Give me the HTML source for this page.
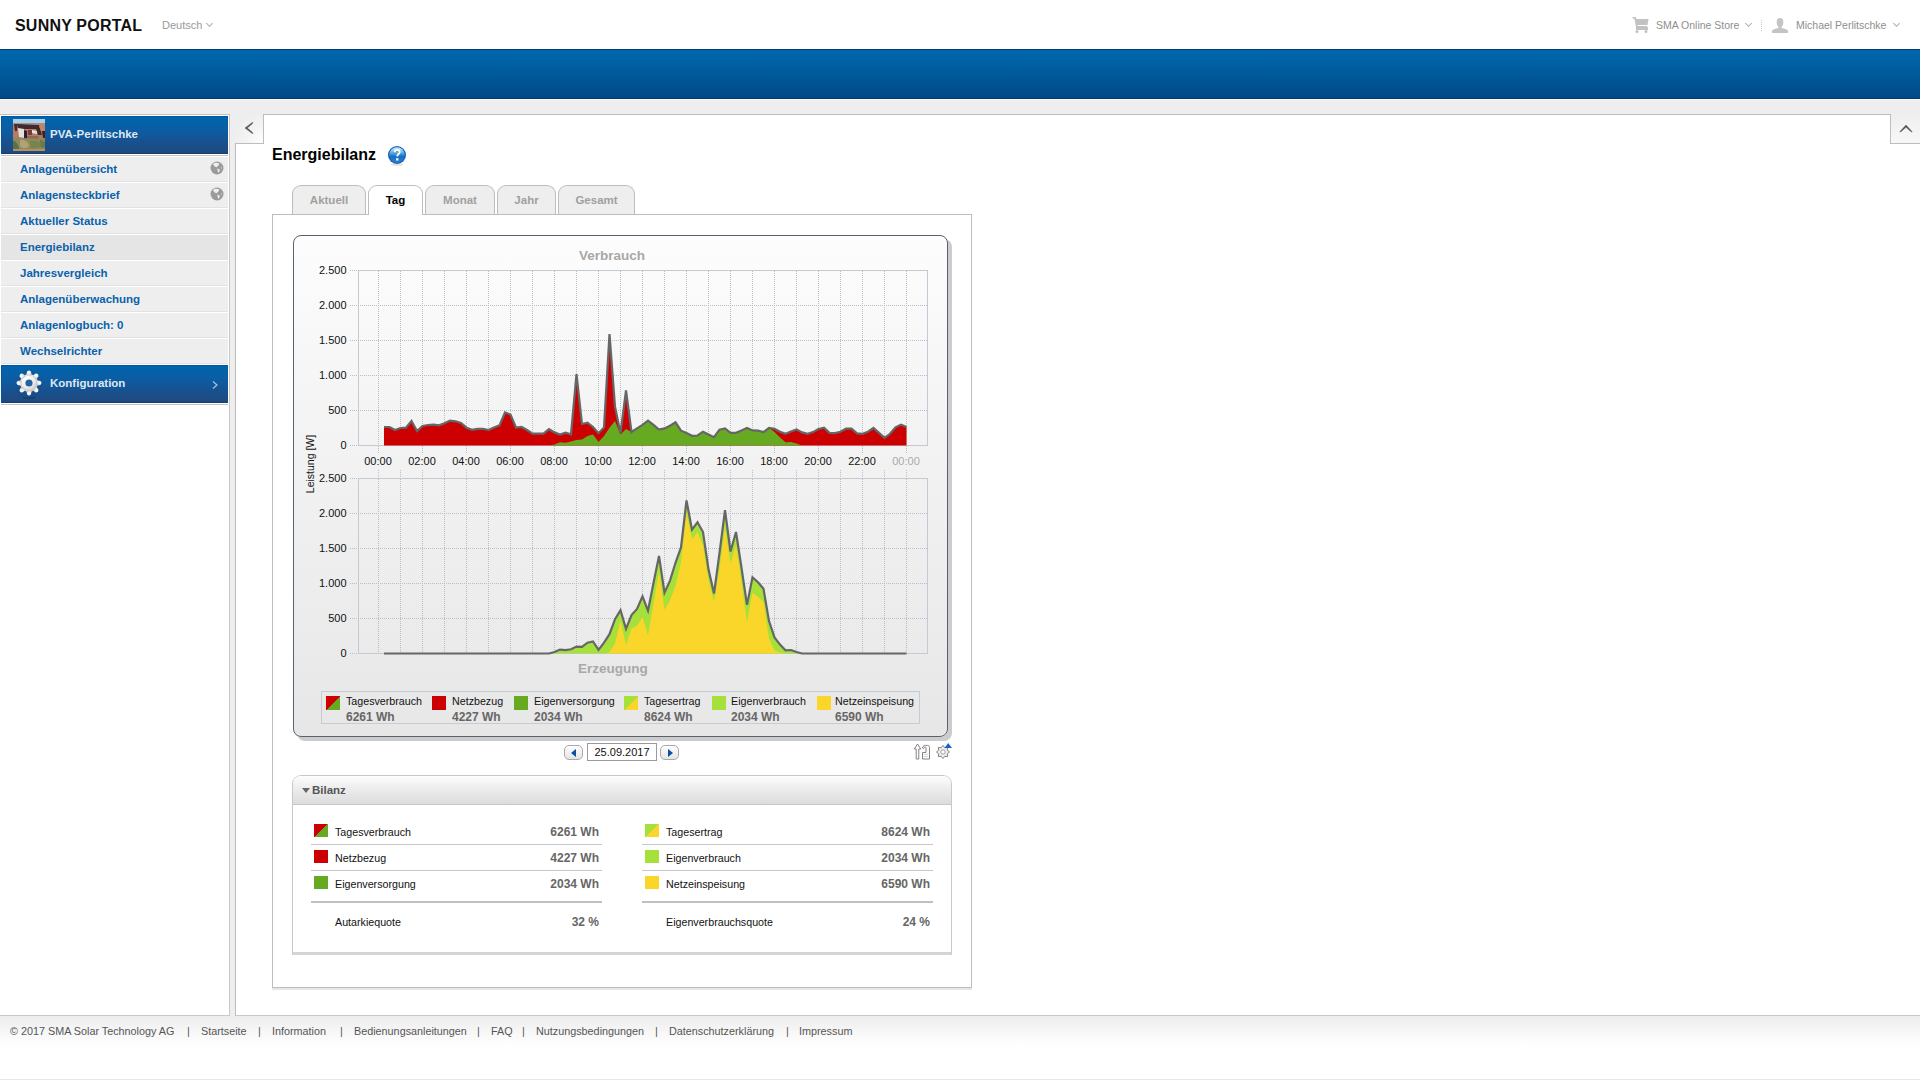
<!DOCTYPE html>
<html><head><meta charset="utf-8"><title>Sunny Portal - Energiebilanz</title>
<style>
*{margin:0;padding:0;box-sizing:border-box}
html,body{width:1920px;height:1080px;overflow:hidden;background:#fff;font-family:"Liberation Sans",sans-serif;position:relative}
.abs{position:absolute}
#hdr{position:absolute;left:0;top:0;width:1920px;height:49px;background:#fff}
.logo{position:absolute;left:15px;top:17px;font-size:16px;font-weight:bold;color:#111;letter-spacing:0.2px;white-space:nowrap}
.lang{position:absolute;left:162px;top:19px;font-size:11px;color:#9a9a9a}
.hdrtxt{position:absolute;top:19px;font-size:10.5px;color:#8f8f8f;white-space:nowrap}
.chev{position:absolute;width:5px;height:5px;border-right:1px solid #b0b0b0;border-bottom:1px solid #b0b0b0;transform:rotate(45deg)}
#bar{position:absolute;left:0;top:49px;width:1920px;height:50px;background:linear-gradient(#0066aa,#0061a5 25%,#004a86);border-top:1px solid #003d74;border-bottom:1px solid #003c70}
#gray{position:absolute;left:0;top:99px;width:1920px;height:917px;background:#eeeeee;border-top:1px solid #fafafa}
#side{position:absolute;left:0;top:114px;width:230px;height:902px;background:#fff;border-top:1px solid #c2c2c2;border-right:1px solid #c8c8c8;border-bottom:1px solid #c8c8c8}
.bluehd{position:absolute;left:1px;width:227px;height:38px;background:linear-gradient(#0064aa,#0a5ea6 30%,#1a4f8a 75%,#1f4a80 95%,#123a6c);border-top:1px solid #0058a5;border-left:1px solid #0058a5}
.bluehd span{position:absolute;left:48px;top:11px;font-size:11.5px;font-weight:bold;color:#dde8f4;white-space:nowrap}
.sep{position:absolute;left:1px;width:227px;height:1px;background:#c4c4c4}
.item{position:absolute;left:1px;width:227px;height:26px;background:#eeeeee;border-top:1px solid #fff;border-bottom:1px solid #e2e2e2}
.item.sel{background:#e5e5e5}
.item span{position:absolute;left:19px;top:6px;font-size:11.5px;font-weight:bold;color:#0a62ab;white-space:nowrap}
#content{position:absolute;left:235px;top:114px;width:1685px;height:902px;background:#fff;border-left:1px solid #bdbdbd;border-top:1px solid #bdbdbd;border-bottom:1px solid #c8c8c8}
#coll{position:absolute;left:235px;top:114px;width:29px;height:30px;background:radial-gradient(circle at 100% 100%,#ffffff 0,#f4f4f4 40%,#eeeeee 75%);border-right:1px solid #bdbdbd;border-bottom:1px solid #bdbdbd}
#upbtn{position:absolute;left:1890px;top:114px;width:30px;height:30px;background:linear-gradient(#eeeeee,#f8f8f8);border-left:1px solid #bdbdbd;border-bottom:1px solid #bdbdbd}
.title{position:absolute;left:272px;top:146px;font-size:16px;font-weight:bold;color:#000;white-space:nowrap}
.tab{position:absolute;top:185px;height:29px;border:1px solid #bdbdbd;border-bottom:none;border-radius:9px 9px 0 0;background:#eeeeee;font-size:11.5px;font-weight:bold;color:#a0a0a0;text-align:center;padding-top:8px}
.tab.act{background:#fff;color:#000;height:30px}
#panel{position:absolute;left:272px;top:214px;width:700px;height:774px;border:1px solid #bdbdbd;background:#fff;box-shadow:0 2px 0 #e6e6e6}
#cbox{position:absolute;left:293px;top:235px;width:655px;height:502px;border:2px solid #56636f;border-width:1.5px;border-radius:8px;background:linear-gradient(#fdfdfd,#f3f3f3 40%,#e7e7e7);box-shadow:4px 4px 0 #cccccc}
.ylab{position:absolute;font-size:11px;color:#111;text-align:right;width:40px}
.xlab{position:absolute;font-size:11px;color:#111;text-align:center;width:40px}
.ctitle{position:absolute;font-size:13.5px;font-weight:bold;color:#a8a8a8;white-space:nowrap}
#legend{position:absolute;left:321px;top:691px;width:599px;height:33px;border:1px solid #c5ccd3}
.lg{position:absolute;top:2.5px;font-size:10.7px;color:#111;white-space:nowrap}
.lg b{display:block;color:#666;font-size:12px;margin-top:3.5px}
.sw{position:absolute;width:14px;height:14px}
.sw.rg{background:linear-gradient(135deg,#cc0000 50%,#66aa22 50%)}
.sw.r{background:#cc0000}
.sw.g{background:#66aa22}
.sw.ly{background:linear-gradient(135deg,#a6e03a 50%,#fad62b 50%)}
.sw.l{background:#a6e03a}
.sw.y{background:#fad62b}
#bil{position:absolute;left:292px;top:775px;width:660px;height:180px;border:1px solid #c8c8c8;border-bottom:3px solid #d4d4d4;border-radius:9px 9px 0 0;background:#fff}
#bilhd{position:absolute;left:0;top:0;width:658px;height:29px;border-radius:8px 8px 0 0;background:linear-gradient(#fdfdfd,#f0f0f0 35%,#dcdcdc);border-bottom:1px solid #c8c8c8}
.brow{position:absolute;height:26px;border-bottom:1px solid #c8c8c8;font-size:10.7px;color:#111}
.brow .nm{position:absolute;left:24px;top:7px;white-space:nowrap}
.brow .vl{position:absolute;right:3px;top:6px;font-weight:bold;color:#666;font-size:12px;white-space:nowrap}
.brow .sw{left:3px;top:5px;width:14px;height:13px}
#foot{position:absolute;left:0;top:1016px;width:1920px;height:64px;background:linear-gradient(#ececec,#f7f7f7 25%,#fefefe 45%,#fff 50%);border-bottom:1px solid #e8e8e8}
#foot span{position:absolute;top:9px;font-size:10.8px;color:#555;white-space:nowrap}
</style></head><body>
<div id="hdr">
 <div class="logo">SUNNY PORTAL</div>
 <div class="lang">Deutsch</div>
 <div class="chev" style="left:207px;top:21px"></div>
 <svg class="abs" style="left:1632px;top:17px" width="17" height="16" viewBox="0 0 17 16"><path d="M0.5,0.5 L3,0.5 L5,10 L15,10" fill="none" stroke="#c2c2c2" stroke-width="1.8"/><path d="M3.5,2 L16.5,2 L15.5,8 L5,8Z" fill="#c2c2c2"/><rect x="4" y="10" width="12" height="3" fill="#c2c2c2"/><circle cx="5" cy="14.5" r="1.5" fill="#c2c2c2"/><circle cx="14" cy="14.5" r="1.5" fill="#c2c2c2"/></svg>
 <div class="hdrtxt" style="left:1656px">SMA Online Store</div>
 <div class="chev" style="left:1746px;top:21px"></div>
 <div class="abs" style="left:1761px;top:20px;width:1px;height:11px;border-left:1px dotted #c8c8c8"></div>
 <svg class="abs" style="left:1772px;top:18px" width="16" height="15" viewBox="0 0 16 15"><path d="M8,0 C10.5,0 11.5,2 11.3,4.5 C11.2,6.5 10.5,8 9.5,9 L9.5,10 C12,10.5 16,11.5 16,13 L16,15 L0,15 L0,13 C0,11.5 4,10.5 6.5,10 L6.5,9 C5.5,8 4.8,6.5 4.7,4.5 C4.5,2 5.5,0 8,0Z" fill="#c4c4c4"/></svg>
 <div class="hdrtxt" style="left:1796px">Michael Perlitschke</div>
 <div class="chev" style="left:1894px;top:21px"></div>
</div>
<div id="bar"></div>
<div id="gray"></div>

<div id="side">
</div>
<div class="bluehd" style="top:116px"><svg width="32" height="32" viewBox="0 0 32 32" style="position:absolute;left:11px;top:2px">
<defs><filter id="hb" x="0" y="0" width="1" height="1"><feGaussianBlur stdDeviation="0.55"/></filter><clipPath id="hc"><rect width="32" height="32"/></clipPath></defs>
<g clip-path="url(#hc)"><g filter="url(#hb)">
<rect x="-2" y="-2" width="36" height="36" fill="#b57a62"/>
<rect x="-2" y="-2" width="36" height="6" fill="#a6d2f2"/>
<path d="M-2,4 L34,4 L34,7 L-2,6Z" fill="#b58a78"/>
<path d="M1,5 L4,5 L4,12 L2,12Z" fill="#4a2a2a"/>
<path d="M4,5 L24,6 L25,10 L5,10Z" fill="#3c2c32"/>
<path d="M5,9 L11,10 L12,19 L6,18Z" fill="#e4e0dc"/>
<path d="M11,11 L14,12 L14,20 L11,19Z" fill="#2a2030"/>
<path d="M15,11 L19,11 L19,16 L15,16Z" fill="#7a3a30"/>
<path d="M19,11 L24,12 L24,15 L19,14Z" fill="#e8e0dc"/>
<path d="M22,6 L26,6 L29,16 L25,16Z" fill="#3e2c2c"/>
<path d="M26,7 L34,7 L34,12 L28,12Z" fill="#c48462"/>
<path d="M29,12 L33,12 L33,19 L30,19Z" fill="#3a2424"/>
<path d="M14,17 L26,17 L25,20 L14,20Z" fill="#8a6a5a"/>
<path d="M-2,20 C4,18 8,21 14,19 C20,20 26,19 34,20 L34,34 L-2,34Z" fill="#8c8a5a"/>
<path d="M-2,22 C2,21 5,24 6,30 L-2,30Z" fill="#5c7048"/>
<path d="M7,21 C11,20 15,22 16,27 C14,30 9,30 7,27Z" fill="#b0a274"/>
<path d="M17,22 C21,21 26,22 29,25 C28,29 22,30 18,29Z" fill="#78844e"/>
<path d="M27,21 C30,21 33,23 33,28 L28,29Z" fill="#6c7a48"/>
<rect x="-2" y="30" width="36" height="4" fill="#b88e62"/>
</g></g>
</svg><span>PVA-Perlitschke</span></div>
<div class="sep" style="top:155px"></div>
<div class="item" style="top:156px"><span>Anlagenübersicht</span><svg width="14" height="14" viewBox="0 0 14 14" style="position:absolute;left:208.5px;top:4px"><circle cx="7" cy="7" r="6.5" fill="#9b9b9b"/><path d="M3,3.2 C4,2 6,1.5 7.5,2 L9.5,2.6 L8.2,4.8 L6.5,6.2 L4.6,5.6 Z" fill="#eee"/><path d="M7.3,7.6 L9.3,8.2 L9.8,9.6 L8.4,12 L7.8,10.2 Z" fill="#eee"/><path d="M11,6 L11.8,6.2 L11.6,8 L11,7.4Z" fill="#ddd"/></svg></div>
<div class="item" style="top:182px"><span>Anlagensteckbrief</span><svg width="14" height="14" viewBox="0 0 14 14" style="position:absolute;left:208.5px;top:4px"><circle cx="7" cy="7" r="6.5" fill="#9b9b9b"/><path d="M3,3.2 C4,2 6,1.5 7.5,2 L9.5,2.6 L8.2,4.8 L6.5,6.2 L4.6,5.6 Z" fill="#eee"/><path d="M7.3,7.6 L9.3,8.2 L9.8,9.6 L8.4,12 L7.8,10.2 Z" fill="#eee"/><path d="M11,6 L11.8,6.2 L11.6,8 L11,7.4Z" fill="#ddd"/></svg></div>
<div class="item" style="top:208px"><span>Aktueller Status</span></div>
<div class="item sel" style="top:234px"><span>Energiebilanz</span></div>
<div class="item" style="top:260px"><span>Jahresvergleich</span></div>
<div class="item" style="top:286px"><span>Anlagenüberwachung</span></div>
<div class="item" style="top:312px"><span>Anlagenlogbuch: 0</span></div>
<div class="item" style="top:338px"><span>Wechselrichter</span></div>
<div class="bluehd" style="top:365px"><svg width="34" height="36" viewBox="-17 -17 34 36" style="position:absolute;left:10px;top:0px">
<defs><radialGradient id="gg" cx="0.38" cy="0.32" r="0.75"><stop offset="0" stop-color="#ffffff"/><stop offset="0.55" stop-color="#ececec"/><stop offset="1" stop-color="#bcbcbc"/></radialGradient>
<radialGradient id="gh" cx="0.5" cy="0.5" r="0.5"><stop offset="0" stop-color="#0b3a70" stop-opacity="0.35"/><stop offset="1" stop-color="#0b3a70" stop-opacity="0"/></radialGradient></defs>
<circle cx="0" cy="1" r="16" fill="url(#gh)"/>
<ellipse cx="0.5" cy="15" rx="6.5" ry="1.1" fill="#0a2850" opacity="0.35"/>
<g fill="url(#gg)">
<circle cx="0" cy="0" r="9"/>
<path d="M-2.8,-7.5 L-1.9,-11.4 Q0,-13.6 1.9,-11.4 L2.8,-7.5Z" transform="rotate(0)"/><path d="M-2.8,-7.5 L-1.9,-11.4 Q0,-13.6 1.9,-11.4 L2.8,-7.5Z" transform="rotate(45)"/><path d="M-2.8,-7.5 L-1.9,-11.4 Q0,-13.6 1.9,-11.4 L2.8,-7.5Z" transform="rotate(90)"/><path d="M-2.8,-7.5 L-1.9,-11.4 Q0,-13.6 1.9,-11.4 L2.8,-7.5Z" transform="rotate(135)"/><path d="M-2.8,-7.5 L-1.9,-11.4 Q0,-13.6 1.9,-11.4 L2.8,-7.5Z" transform="rotate(180)"/><path d="M-2.8,-7.5 L-1.9,-11.4 Q0,-13.6 1.9,-11.4 L2.8,-7.5Z" transform="rotate(225)"/><path d="M-2.8,-7.5 L-1.9,-11.4 Q0,-13.6 1.9,-11.4 L2.8,-7.5Z" transform="rotate(270)"/><path d="M-2.8,-7.5 L-1.9,-11.4 Q0,-13.6 1.9,-11.4 L2.8,-7.5Z" transform="rotate(315)"/>
</g>
<circle cx="0" cy="0" r="3.6" fill="#2363a0"/>
</svg><span style="left:48px;top:11px">Konfiguration</span><svg width="6" height="8" viewBox="0 0 6 8" style="position:absolute;left:210px;top:15px"><path d="M1,0.5 L5,4 L1,7.5" fill="none" stroke="#a8c4e0" stroke-width="1.2"/></svg></div>
<div class="sep" style="top:404px"></div>

<div id="content"></div>
<div id="coll"></div><svg class="abs" style="left:240px;top:118px" width="20" height="20" viewBox="240 118 20 20"><path d="M252.6,122.3 L245,128 L252.6,133.7 L252.6,132.6 L247.3,128 L252.6,123.4Z" fill="#555" stroke="#555" stroke-width="0.5" stroke-linejoin="round"/></svg>
<div id="upbtn"></div><svg class="abs" style="left:1896px;top:120px" width="20" height="16" viewBox="1896 120 20 16"><path d="M1899.8,131.8 L1906,125 L1912.2,131.8 L1911.2,131.8 L1906,127.3 L1900.8,131.8Z" fill="#555" stroke="#555" stroke-width="0.5" stroke-linejoin="round"/></svg>

<div class="title">Energiebilanz</div>
<svg class="abs" style="left:387px;top:145px" width="20" height="21" viewBox="0 0 20 21">
 <defs><linearGradient id="hq" x1="0" y1="0" x2="0" y2="1"><stop offset="0" stop-color="#d2f4ff"/><stop offset="0.35" stop-color="#58b0ec"/><stop offset="0.6" stop-color="#0f70c8"/><stop offset="1" stop-color="#2a80d0"/></linearGradient></defs>
 <ellipse cx="10" cy="19.6" rx="6" ry="1.1" fill="#000" opacity="0.12"/>
 <circle cx="10" cy="10" r="9" fill="#1c5db0"/>
 <circle cx="10" cy="10" r="7.8" fill="url(#hq)"/>
 <path d="M7.6,7.4 C7.6,5.8 8.7,5 10.1,5 C11.7,5 12.7,5.9 12.7,7.2 C12.7,8.8 10.6,9.1 10.3,10.8 L10.3,11.6" fill="none" stroke="#333" stroke-width="2.2" opacity="0.55" transform="translate(-0.2,0.5)"/>
 <path d="M7.6,7.4 C7.6,5.8 8.7,5 10.1,5 C11.7,5 12.7,5.9 12.7,7.2 C12.7,8.8 10.6,9.1 10.3,10.8 L10.3,11.6" fill="none" stroke="#fff" stroke-width="2"/>
 <rect x="9.1" y="13.2" width="2.3" height="2.3" fill="#fff"/>
</svg>

<div id="panel"></div>
<div class="tab" style="left:292px;width:74px">Aktuell</div>
<div class="tab act" style="left:368px;width:55px">Tag</div>
<div class="tab" style="left:425px;width:70px">Monat</div>
<div class="tab" style="left:497px;width:59px">Jahr</div>
<div class="tab" style="left:558px;width:77px">Gesamt</div>

<div id="cbox"></div>

<svg class="chart" width="1920" height="1080" viewBox="0 0 1920 1080" style="position:absolute;left:0;top:0">
 <defs>
  <linearGradient id="cbg" x1="0" y1="0" x2="0" y2="1">
   <stop offset="0" stop-color="#fdfdfd"/><stop offset="1" stop-color="#e6e6e6"/>
  </linearGradient>
 </defs>
 <g stroke="#b9bec4" stroke-width="1" stroke-dasharray="1 1" fill="none">
  <line x1="378.5" y1="271" x2="378.5" y2="445"/>
<line x1="400.5" y1="271" x2="400.5" y2="445"/>
<line x1="422.5" y1="271" x2="422.5" y2="445"/>
<line x1="444.5" y1="271" x2="444.5" y2="445"/>
<line x1="466.5" y1="271" x2="466.5" y2="445"/>
<line x1="488.5" y1="271" x2="488.5" y2="445"/>
<line x1="510.5" y1="271" x2="510.5" y2="445"/>
<line x1="532.5" y1="271" x2="532.5" y2="445"/>
<line x1="554.5" y1="271" x2="554.5" y2="445"/>
<line x1="576.5" y1="271" x2="576.5" y2="445"/>
<line x1="598.5" y1="271" x2="598.5" y2="445"/>
<line x1="620.5" y1="271" x2="620.5" y2="445"/>
<line x1="642.5" y1="271" x2="642.5" y2="445"/>
<line x1="664.5" y1="271" x2="664.5" y2="445"/>
<line x1="686.5" y1="271" x2="686.5" y2="445"/>
<line x1="708.5" y1="271" x2="708.5" y2="445"/>
<line x1="730.5" y1="271" x2="730.5" y2="445"/>
<line x1="752.5" y1="271" x2="752.5" y2="445"/>
<line x1="774.5" y1="271" x2="774.5" y2="445"/>
<line x1="796.5" y1="271" x2="796.5" y2="445"/>
<line x1="818.5" y1="271" x2="818.5" y2="445"/>
<line x1="840.5" y1="271" x2="840.5" y2="445"/>
<line x1="862.5" y1="271" x2="862.5" y2="445"/>
<line x1="884.5" y1="271" x2="884.5" y2="445"/>
<line x1="906.5" y1="271" x2="906.5" y2="445"/>
<line x1="358" y1="305.5" x2="927" y2="305.5"/>
<line x1="358" y1="340.5" x2="927" y2="340.5"/>
<line x1="358" y1="375.5" x2="927" y2="375.5"/>
<line x1="358" y1="410.5" x2="927" y2="410.5"/>
  <line x1="378.5" y1="479" x2="378.5" y2="653"/>
<line x1="400.5" y1="479" x2="400.5" y2="653"/>
<line x1="422.5" y1="479" x2="422.5" y2="653"/>
<line x1="444.5" y1="479" x2="444.5" y2="653"/>
<line x1="466.5" y1="479" x2="466.5" y2="653"/>
<line x1="488.5" y1="479" x2="488.5" y2="653"/>
<line x1="510.5" y1="479" x2="510.5" y2="653"/>
<line x1="532.5" y1="479" x2="532.5" y2="653"/>
<line x1="554.5" y1="479" x2="554.5" y2="653"/>
<line x1="576.5" y1="479" x2="576.5" y2="653"/>
<line x1="598.5" y1="479" x2="598.5" y2="653"/>
<line x1="620.5" y1="479" x2="620.5" y2="653"/>
<line x1="642.5" y1="479" x2="642.5" y2="653"/>
<line x1="664.5" y1="479" x2="664.5" y2="653"/>
<line x1="686.5" y1="479" x2="686.5" y2="653"/>
<line x1="708.5" y1="479" x2="708.5" y2="653"/>
<line x1="730.5" y1="479" x2="730.5" y2="653"/>
<line x1="752.5" y1="479" x2="752.5" y2="653"/>
<line x1="774.5" y1="479" x2="774.5" y2="653"/>
<line x1="796.5" y1="479" x2="796.5" y2="653"/>
<line x1="818.5" y1="479" x2="818.5" y2="653"/>
<line x1="840.5" y1="479" x2="840.5" y2="653"/>
<line x1="862.5" y1="479" x2="862.5" y2="653"/>
<line x1="884.5" y1="479" x2="884.5" y2="653"/>
<line x1="906.5" y1="479" x2="906.5" y2="653"/>
<line x1="358" y1="513.5" x2="927" y2="513.5"/>
<line x1="358" y1="548.5" x2="927" y2="548.5"/>
<line x1="358" y1="583.5" x2="927" y2="583.5"/>
<line x1="358" y1="618.5" x2="927" y2="618.5"/>
 </g>
 <g stroke="#b9bec4" stroke-width="1" stroke-dasharray="1 1" fill="none">
  <line x1="350" y1="270.5" x2="358" y2="270.5"/><line x1="350" y1="305.5" x2="358" y2="305.5"/><line x1="350" y1="340.5" x2="358" y2="340.5"/><line x1="350" y1="375.5" x2="358" y2="375.5"/><line x1="350" y1="410.5" x2="358" y2="410.5"/><line x1="350" y1="445.5" x2="358" y2="445.5"/>
  <line x1="350" y1="478.5" x2="358" y2="478.5"/><line x1="350" y1="513.5" x2="358" y2="513.5"/><line x1="350" y1="548.5" x2="358" y2="548.5"/><line x1="350" y1="583.5" x2="358" y2="583.5"/><line x1="350" y1="618.5" x2="358" y2="618.5"/><line x1="350" y1="653.5" x2="358" y2="653.5"/>
  <line x1="378.5" y1="446" x2="378.5" y2="454"/><line x1="422.5" y1="446" x2="422.5" y2="454"/><line x1="466.5" y1="446" x2="466.5" y2="454"/><line x1="510.5" y1="446" x2="510.5" y2="454"/><line x1="554.5" y1="446" x2="554.5" y2="454"/><line x1="598.5" y1="446" x2="598.5" y2="454"/><line x1="642.5" y1="446" x2="642.5" y2="454"/><line x1="686.5" y1="446" x2="686.5" y2="454"/><line x1="730.5" y1="446" x2="730.5" y2="454"/><line x1="774.5" y1="446" x2="774.5" y2="454"/><line x1="818.5" y1="446" x2="818.5" y2="454"/><line x1="862.5" y1="446" x2="862.5" y2="454"/><line x1="906.5" y1="446" x2="906.5" y2="454"/>
  <line x1="378.5" y1="470" x2="378.5" y2="478"/><line x1="400.5" y1="470" x2="400.5" y2="478"/><line x1="422.5" y1="470" x2="422.5" y2="478"/><line x1="444.5" y1="470" x2="444.5" y2="478"/><line x1="466.5" y1="470" x2="466.5" y2="478"/><line x1="488.5" y1="470" x2="488.5" y2="478"/><line x1="510.5" y1="470" x2="510.5" y2="478"/><line x1="532.5" y1="470" x2="532.5" y2="478"/><line x1="554.5" y1="470" x2="554.5" y2="478"/><line x1="576.5" y1="470" x2="576.5" y2="478"/><line x1="598.5" y1="470" x2="598.5" y2="478"/><line x1="620.5" y1="470" x2="620.5" y2="478"/><line x1="642.5" y1="470" x2="642.5" y2="478"/><line x1="664.5" y1="470" x2="664.5" y2="478"/><line x1="686.5" y1="470" x2="686.5" y2="478"/><line x1="708.5" y1="470" x2="708.5" y2="478"/><line x1="730.5" y1="470" x2="730.5" y2="478"/><line x1="752.5" y1="470" x2="752.5" y2="478"/><line x1="774.5" y1="470" x2="774.5" y2="478"/><line x1="796.5" y1="470" x2="796.5" y2="478"/><line x1="818.5" y1="470" x2="818.5" y2="478"/><line x1="840.5" y1="470" x2="840.5" y2="478"/><line x1="862.5" y1="470" x2="862.5" y2="478"/><line x1="884.5" y1="470" x2="884.5" y2="478"/><line x1="906.5" y1="470" x2="906.5" y2="478"/>
 </g>
 <rect x="358.5" y="270.5" width="569" height="175" fill="none" stroke="#c3cad1"/>
 <rect x="358.5" y="478.5" width="569" height="175" fill="none" stroke="#c3cad1"/>
 <path d="M384,445.5 L384,427 L389.5,427 L395,430 L400.5,428 L406,427.7 L411.5,421 L417,431 L422.5,426 L428,425 L433.5,424.6 L439,425.3 L444.5,423.3 L450,420.6 L455.5,421.3 L461,423 L466.5,427.7 L472,429.8 L477.5,428.8 L483,428.8 L488.5,430 L494,427.5 L499.5,425.4 L505,412.5 L510.5,414.6 L516,427.5 L521.5,427 L527,430 L532.5,433.6 L538,433.6 L543.5,433.6 L549,429.2 L554.5,432.4 L560,434.5 L565.5,432.6 L571,434.2 L576.5,374 L582,424 L587.5,422.7 L593,427 L598.5,433.2 L604,427.4 L609.5,334 L615,406.7 L620.5,433.3 L626,390.5 L631.5,432 L637,428.4 L642.5,424.8 L648,420.6 L653.5,424.8 L659,429.6 L664.5,428.4 L670,425.8 L675.5,422.3 L681,430.7 L686.5,433.1 L692,435.8 L697.5,435.5 L703,431.7 L708.5,434.5 L714,437.2 L719.5,429.7 L725,428.4 L730.5,432.8 L736,432.8 L741.5,430.4 L747,428 L752.5,430.4 L758,430.7 L763.5,432.1 L769,428 L774.5,428.7 L780,431.7 L785.5,433.8 L791,431.4 L796.5,429.4 L802,432.4 L807.5,433.8 L813,432.1 L818.5,429 L824,427.7 L829.5,432.8 L835,433.1 L840.5,431.7 L846,428.7 L851.5,428.7 L857,433.4 L862.5,433.8 L868,431.7 L873.5,428 L879,432.8 L884.5,437.8 L890,433.8 L895.5,427.3 L901,424.6 L906.5,427 L906.5,445.5 Z" fill="#cc0000"/>
 <path d="M384,445.5 L384,445.5 L389.5,445.5 L395,445.5 L400.5,445.5 L406,445.5 L411.5,445.5 L417,445.5 L422.5,445.5 L428,445.5 L433.5,445.5 L439,445.5 L444.5,445.5 L450,445.5 L455.5,445.5 L461,445.5 L466.5,445.5 L472,445.5 L477.5,445.5 L483,445.5 L488.5,445.5 L494,445.5 L499.5,445.5 L505,445.5 L510.5,445.5 L516,445.5 L521.5,445.5 L527,445.5 L532.5,445.5 L538,445.5 L543.5,445.5 L549,445.5 L554.5,444.5 L560,442.3 L565.5,442.7 L571,441.6 L576.5,440 L582,439.6 L587.5,435.9 L593,434.5 L598.5,442 L604,435.9 L609.5,427.8 L615,421 L620.5,434.5 L626,429.1 L631.5,432 L637,428.4 L642.5,424.8 L648,420.6 L653.5,424.8 L659,429.6 L664.5,428.4 L670,425.8 L675.5,422.3 L681,430.7 L686.5,433.1 L692,435.8 L697.5,435.5 L703,431.7 L708.5,434.5 L714,437.2 L719.5,429.7 L725,428.4 L730.5,432.8 L736,432.8 L741.5,430.4 L747,428 L752.5,430.4 L758,430.7 L763.5,432.1 L769,428 L774.5,432.1 L780,437.5 L785.5,442.2 L791,441.9 L796.5,443.6 L802,445.5 L807.5,445.5 L813,445.5 L818.5,445.5 L824,445.5 L829.5,445.5 L835,445.5 L840.5,445.5 L846,445.5 L851.5,445.5 L857,445.5 L862.5,445.5 L868,445.5 L873.5,445.5 L879,445.5 L884.5,445.5 L890,445.5 L895.5,445.5 L901,445.5 L906.5,445.5 L906.5,445.5 Z" fill="#66aa22"/>
 <path d="M384,427 L389.5,427 L395,430 L400.5,428 L406,427.7 L411.5,421 L417,431 L422.5,426 L428,425 L433.5,424.6 L439,425.3 L444.5,423.3 L450,420.6 L455.5,421.3 L461,423 L466.5,427.7 L472,429.8 L477.5,428.8 L483,428.8 L488.5,430 L494,427.5 L499.5,425.4 L505,412.5 L510.5,414.6 L516,427.5 L521.5,427 L527,430 L532.5,433.6 L538,433.6 L543.5,433.6 L549,429.2 L554.5,432.4 L560,434.5 L565.5,432.6 L571,434.2 L576.5,374 L582,424 L587.5,422.7 L593,427 L598.5,433.2 L604,427.4 L609.5,334 L615,406.7 L620.5,433.3 L626,390.5 L631.5,432 L637,428.4 L642.5,424.8 L648,420.6 L653.5,424.8 L659,429.6 L664.5,428.4 L670,425.8 L675.5,422.3 L681,430.7 L686.5,433.1 L692,435.8 L697.5,435.5 L703,431.7 L708.5,434.5 L714,437.2 L719.5,429.7 L725,428.4 L730.5,432.8 L736,432.8 L741.5,430.4 L747,428 L752.5,430.4 L758,430.7 L763.5,432.1 L769,428 L774.5,428.7 L780,431.7 L785.5,433.8 L791,431.4 L796.5,429.4 L802,432.4 L807.5,433.8 L813,432.1 L818.5,429 L824,427.7 L829.5,432.8 L835,433.1 L840.5,431.7 L846,428.7 L851.5,428.7 L857,433.4 L862.5,433.8 L868,431.7 L873.5,428 L879,432.8 L884.5,437.8 L890,433.8 L895.5,427.3 L901,424.6 L906.5,427" fill="none" stroke="#666" stroke-width="2.2" stroke-linejoin="miter"/>
 <path d="M384,653.5 L384,653.5 L389.5,653.5 L395,653.5 L400.5,653.5 L406,653.5 L411.5,653.5 L417,653.5 L422.5,653.5 L428,653.5 L433.5,653.5 L439,653.5 L444.5,653.5 L450,653.5 L455.5,653.5 L461,653.5 L466.5,653.5 L472,653.5 L477.5,653.5 L483,653.5 L488.5,653.5 L494,653.5 L499.5,653.5 L505,653.5 L510.5,653.5 L516,653.5 L521.5,653.5 L527,653.5 L532.5,653.5 L538,653.5 L543.5,653.5 L549,653.5 L554.5,652 L560,649.6 L565.5,650.1 L571,649.3 L576.5,646.6 L582,646.9 L587.5,642.7 L593,641.4 L598.5,649.9 L604,642.7 L609.5,634.2 L615,619.2 L620.5,610.1 L626,628.8 L631.5,615 L637,608.9 L642.5,596.3 L648,610.7 L653.5,583 L659,555.9 L664.5,592.7 L670,580.6 L675.5,562.8 L681,547.4 L686.5,500.4 L692,529.6 L697.5,522.3 L703,532 L708.5,569.3 L714,593.6 L719.5,553 L725,510.1 L730.5,551.5 L736,532 L741.5,567.7 L747,604.9 L752.5,577.4 L758,582.2 L763.5,588.7 L769,621.1 L774.5,637.4 L780,644.6 L785.5,650.3 L791,650 L796.5,652 L802,653.5 L807.5,653.5 L813,653.5 L818.5,653.5 L824,653.5 L829.5,653.5 L835,653.5 L840.5,653.5 L846,653.5 L851.5,653.5 L857,653.5 L862.5,653.5 L868,653.5 L873.5,653.5 L879,653.5 L884.5,653.5 L890,653.5 L895.5,653.5 L901,653.5 L906.5,653.5 L906.5,653.5 Z" fill="#a6e03a"/>
 <path d="M384,653.5 L384,653.5 L389.5,653.5 L395,653.5 L400.5,653.5 L406,653.5 L411.5,653.5 L417,653.5 L422.5,653.5 L428,653.5 L433.5,653.5 L439,653.5 L444.5,653.5 L450,653.5 L455.5,653.5 L461,653.5 L466.5,653.5 L472,653.5 L477.5,653.5 L483,653.5 L488.5,653.5 L494,653.5 L499.5,653.5 L505,653.5 L510.5,653.5 L516,653.5 L521.5,653.5 L527,653.5 L532.5,653.5 L538,653.5 L543.5,653.5 L549,653.5 L554.5,653.5 L560,653.5 L565.5,653.5 L571,653.5 L576.5,653.5 L582,653.5 L587.5,653.5 L593,653.5 L598.5,653.5 L604,653.5 L609.5,651.9 L615,643.7 L620.5,621.1 L626,645.2 L631.5,628.5 L637,626 L642.5,617 L648,635.6 L653.5,603.7 L659,571.8 L664.5,609.8 L670,600.3 L675.5,586 L681,562.2 L686.5,512.8 L692,539.3 L697.5,532.3 L703,545.8 L708.5,580.3 L714,601.9 L719.5,568.8 L725,527.2 L730.5,564.2 L736,544.7 L741.5,582.8 L747,622.4 L752.5,592.5 L758,597 L763.5,602.1 L769,638.6 L774.5,650.8 L780,652.6 L785.5,653.5 L791,653.5 L796.5,653.5 L802,653.5 L807.5,653.5 L813,653.5 L818.5,653.5 L824,653.5 L829.5,653.5 L835,653.5 L840.5,653.5 L846,653.5 L851.5,653.5 L857,653.5 L862.5,653.5 L868,653.5 L873.5,653.5 L879,653.5 L884.5,653.5 L890,653.5 L895.5,653.5 L901,653.5 L906.5,653.5 L906.5,653.5 Z" fill="#fad62b"/>
 <path d="M384,653.5 L389.5,653.5 L395,653.5 L400.5,653.5 L406,653.5 L411.5,653.5 L417,653.5 L422.5,653.5 L428,653.5 L433.5,653.5 L439,653.5 L444.5,653.5 L450,653.5 L455.5,653.5 L461,653.5 L466.5,653.5 L472,653.5 L477.5,653.5 L483,653.5 L488.5,653.5 L494,653.5 L499.5,653.5 L505,653.5 L510.5,653.5 L516,653.5 L521.5,653.5 L527,653.5 L532.5,653.5 L538,653.5 L543.5,653.5 L549,653.5 L554.5,652 L560,649.6 L565.5,650.1 L571,649.3 L576.5,646.6 L582,646.9 L587.5,642.7 L593,641.4 L598.5,649.9 L604,642.7 L609.5,634.2 L615,619.2 L620.5,610.1 L626,628.8 L631.5,615 L637,608.9 L642.5,596.3 L648,610.7 L653.5,583 L659,555.9 L664.5,592.7 L670,580.6 L675.5,562.8 L681,547.4 L686.5,500.4 L692,529.6 L697.5,522.3 L703,532 L708.5,569.3 L714,593.6 L719.5,553 L725,510.1 L730.5,551.5 L736,532 L741.5,567.7 L747,604.9 L752.5,577.4 L758,582.2 L763.5,588.7 L769,621.1 L774.5,637.4 L780,644.6 L785.5,650.3 L791,650 L796.5,652 L802,653.5 L807.5,653.5 L813,653.5 L818.5,653.5 L824,653.5 L829.5,653.5 L835,653.5 L840.5,653.5 L846,653.5 L851.5,653.5 L857,653.5 L862.5,653.5 L868,653.5 L873.5,653.5 L879,653.5 L884.5,653.5 L890,653.5 L895.5,653.5 L901,653.5 L906.5,653.5" fill="none" stroke="#666" stroke-width="2.2"/>
</svg>

<div class="ctitle" style="left:579px;top:248px">Verbrauch</div>
<div class="ctitle" style="left:578px;top:661px">Erzeugung</div>
<div class="ylab" style="left:306.5px;top:264px">2.500</div><div class="ylab" style="left:306.5px;top:299px">2.000</div><div class="ylab" style="left:306.5px;top:334px">1.500</div><div class="ylab" style="left:306.5px;top:369px">1.000</div><div class="ylab" style="left:306.5px;top:404px">500</div><div class="ylab" style="left:306.5px;top:439px">0</div>
<div class="ylab" style="left:306.5px;top:472px">2.500</div><div class="ylab" style="left:306.5px;top:507px">2.000</div><div class="ylab" style="left:306.5px;top:542px">1.500</div><div class="ylab" style="left:306.5px;top:577px">1.000</div><div class="ylab" style="left:306.5px;top:612px">500</div><div class="ylab" style="left:306.5px;top:647px">0</div>
<div class="xlab" style="left:358px;top:455px;">00:00</div><div class="xlab" style="left:402px;top:455px;">02:00</div><div class="xlab" style="left:446px;top:455px;">04:00</div><div class="xlab" style="left:490px;top:455px;">06:00</div><div class="xlab" style="left:534px;top:455px;">08:00</div><div class="xlab" style="left:578px;top:455px;">10:00</div><div class="xlab" style="left:622px;top:455px;">12:00</div><div class="xlab" style="left:666px;top:455px;">14:00</div><div class="xlab" style="left:710px;top:455px;">16:00</div><div class="xlab" style="left:754px;top:455px;">18:00</div><div class="xlab" style="left:798px;top:455px;">20:00</div><div class="xlab" style="left:842px;top:455px;">22:00</div><div class="xlab" style="left:886px;top:455px;color:#aaa">00:00</div>
<div class="abs" style="left:274px;top:458px;width:72px;font-size:10.5px;color:#111;transform:rotate(-90deg);text-align:center;white-space:nowrap">Leistung [W]</div>

<div id="legend">
 <div class="sw rg" style="left:4px;top:4px"></div><div class="lg" style="left:24px">Tagesverbrauch<b>6261 Wh</b></div>
 <div class="sw r" style="left:110px;top:4px"></div><div class="lg" style="left:130px">Netzbezug<b>4227 Wh</b></div>
 <div class="sw g" style="left:192px;top:4px"></div><div class="lg" style="left:212px">Eigenversorgung<b>2034 Wh</b></div>
 <div class="sw ly" style="left:302px;top:4px"></div><div class="lg" style="left:322px">Tagesertrag<b>8624 Wh</b></div>
 <div class="sw l" style="left:390px;top:4px"></div><div class="lg" style="left:409px">Eigenverbrauch<b>2034 Wh</b></div>
 <div class="sw y" style="left:495px;top:4px"></div><div class="lg" style="left:513px">Netzeinspeisung<b>6590 Wh</b></div>
</div>

<!-- date nav -->
<div class="abs" style="left:564px;top:745px;width:19px;height:15px;border:1px solid #a9a9a9;border-radius:5px;background:linear-gradient(#fff,#e4e4e4)"><svg width="6" height="8" viewBox="0 0 6 8" style="position:absolute;left:5.5px;top:2.5px"><path d="M5,0 L0,4 L5,8Z" fill="#0b4fa0"/></svg></div>
<div class="abs" style="left:587px;top:743px;width:70px;height:18px;border:1px solid #9a9a9a;background:#fff;font-size:11px;color:#111;text-align:center;padding-top:2px">25.09.2017</div>
<div class="abs" style="left:660px;top:745px;width:19px;height:15px;border:1px solid #a9a9a9;border-radius:5px;background:linear-gradient(#fff,#e4e4e4)"><svg width="6" height="8" viewBox="0 0 6 8" style="position:absolute;left:7px;top:2.5px"><path d="M0,0 L5,4 L0,8Z" fill="#0b4fa0"/></svg></div>
<svg class="abs" style="left:913px;top:742px" width="42" height="19" viewBox="0 0 42 19">
 <path d="M3.2,17 L3.2,7 L1.3,7 L4.5,2 L7.7,7 L5.8,7 L5.8,17Z" fill="#fff" stroke="#777" stroke-width="0.9" stroke-linejoin="round"/>
 <path d="M9.5,17 L9.5,10.5 L13,10.5 L13,6 C13,4.8 12,4.5 11.4,5.4 L10.5,6.6 L9.5,6 C9.7,4.6 10.5,3.4 12.5,3.4 L14.5,3.4 C15.8,3.4 16.5,4.2 16.5,5.5 L16.5,17Z" fill="#fff" stroke="#777" stroke-width="0.9" stroke-linejoin="round"/>
 <path d="M10.8,12.5 L15.2,12.5 M10.8,14.5 L15.2,14.5" stroke="#ccc" stroke-width="0.8"/>
 <g transform="translate(21,1)"><path d="M9.00,2.40 L10.76,4.75 L13.67,4.33 L13.25,7.24 L15.60,9.00 L13.25,10.76 L13.67,13.67 L10.76,13.25 L9.00,15.60 L7.24,13.25 L4.33,13.67 L4.75,10.76 L2.40,9.00 L4.75,7.24 L4.33,4.33 L7.24,4.75Z" fill="#eee" stroke="#888" stroke-width="1" stroke-linejoin="round"/><circle cx="9" cy="9" r="2.2" fill="#fff" stroke="#999" stroke-width="0.9"/></g>
 <path d="M31.5,6 L35.2,1 L39,6Z" fill="#1464c8"/>
</svg>

<div id="bil">
 <div id="bilhd"><svg width="8" height="5" viewBox="0 0 8 5" style="position:absolute;left:9px;top:12px"><path d="M0,0 L8,0 L4,5Z" fill="#666"/></svg><span style="position:absolute;left:19px;top:8px;font-size:11.5px;font-weight:bold;color:#555">Bilanz</span></div>
</div>
<div class="brow" style="left:311px;top:819px;width:291px"><div class="sw rg"></div><span class="nm">Tagesverbrauch</span><span class="vl">6261 Wh</span></div>
<div class="brow" style="left:311px;top:845px;width:291px"><div class="sw r"></div><span class="nm">Netzbezug</span><span class="vl">4227 Wh</span></div>
<div class="brow" style="left:311px;top:871px;width:291px;border-bottom:2px solid #c0c0c0;height:32px"><div class="sw g"></div><span class="nm">Eigenversorgung</span><span class="vl">2034 Wh</span></div>
<div class="brow" style="left:311px;top:909px;width:291px;border:none"><span class="nm">Autarkiequote</span><span class="vl">32 %</span></div>
<div class="brow" style="left:642px;top:819px;width:291px"><div class="sw ly"></div><span class="nm">Tagesertrag</span><span class="vl">8624 Wh</span></div>
<div class="brow" style="left:642px;top:845px;width:291px"><div class="sw l"></div><span class="nm">Eigenverbrauch</span><span class="vl">2034 Wh</span></div>
<div class="brow" style="left:642px;top:871px;width:291px;border-bottom:2px solid #c0c0c0;height:32px"><div class="sw y"></div><span class="nm">Netzeinspeisung</span><span class="vl">6590 Wh</span></div>
<div class="brow" style="left:642px;top:909px;width:291px;border:none"><span class="nm">Eigenverbrauchsquote</span><span class="vl">24 %</span></div>

<div id="foot">
 <span style="left:10px">© 2017 SMA Solar Technology AG</span>
 <span style="left:187px">|</span><span style="left:201px">Startseite</span>
 <span style="left:258px">|</span><span style="left:272px">Information</span>
 <span style="left:340px">|</span><span style="left:354px">Bedienungsanleitungen</span>
 <span style="left:477px">|</span><span style="left:491px">FAQ</span>
 <span style="left:522px">|</span><span style="left:536px">Nutzungsbedingungen</span>
 <span style="left:655px">|</span><span style="left:669px">Datenschutzerklärung</span>
 <span style="left:786px">|</span><span style="left:799px">Impressum</span>
</div>
</body></html>
